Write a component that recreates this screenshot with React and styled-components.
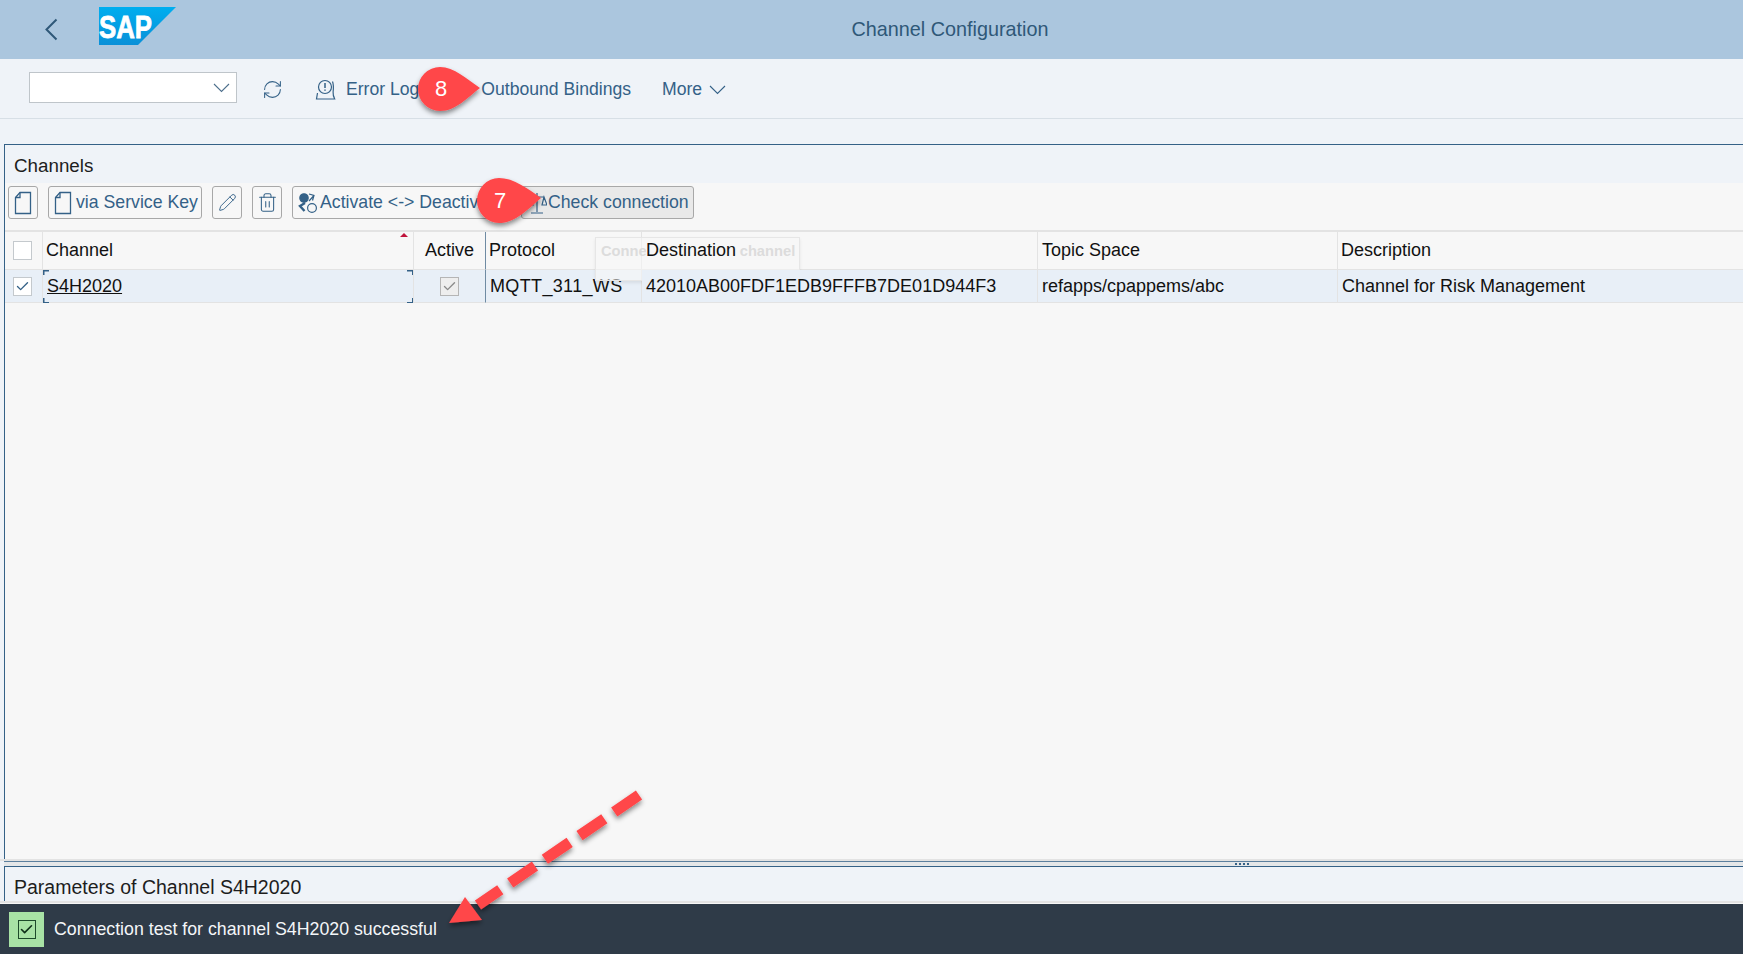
import styled, { createGlobalStyle } from "styled-components";
import { RefreshCw, Pencil, Trash2, Check } from "lucide-react";

const GlobalStyle = createGlobalStyle`
  html, body { margin: 0; padding: 0; background: #fff; }
  body { font-family: "Liberation Sans", Arial, sans-serif; }
`;

const Page = styled.div`
  position: relative;
  width: 1743px;
  height: 957px;
  overflow: hidden;
  display: flex;
  flex-direction: column;
  background: #eff3f8;
`;

const Header = styled.header`
  height: 59px;
  flex: none;
  background: #abc6de;
  display: flex;
  align-items: center;
  position: relative;
  color: #2f5878;
`;

const BackIcon = styled.svg`
  margin-left: 44px;
`;

const Logo = styled.svg`
  margin-left: 41px;
  margin-top: -7px;
`;

const HeaderTitle = styled.div`
  position: absolute;
  left: 0;
  right: 0;
  top: 18px;
  text-align: center;
  font-size: 19.8px;
  padding-left: 157px;
  color: #2f5878;
`;

const Toolbar = styled.div`
  height: 60px;
  flex: none;
  box-sizing: border-box;
  border-bottom: 1px solid #d7dfe6;
  display: flex;
  align-items: center;
  padding: 2px 0 0 29px;
  color: #346187;
  font-size: 17.6px;
`;

const Select = styled.div`
  width: 208px;
  height: 31px;
  margin-bottom: 4px;
  box-sizing: border-box;
  background: #fff;
  border: 1px solid #bfc5ca;
  display: flex;
  align-items: center;
  justify-content: flex-end;
  padding-right: 6px;
  color: #4d6f8c;
`;

const ToolAction = styled.div`
  margin-left: ${(props) => props.$gap}px;
  display: flex;
  align-items: center;
  gap: ${(props) => props.$inner || 0}px;
`;

const Panel = styled.section`
  flex: ${(props) => (props.$grow ? 1 : "none")};
  min-height: 0;
  margin-left: 4px;
  margin-top: ${(props) => props.$top || 0}px;
  border-left: 1px solid #346187;
  border-top: 1px solid #346187;
  display: flex;
  flex-direction: column;
  background: #f7f7f7;
`;

const PanelTitle = styled.div`
  height: ${(props) => props.$height}px;
  flex: none;
  box-sizing: border-box;
  background: #eff3f8;
  color: #1d1d1d;
  font-size: ${(props) => props.$size}px;
  padding-left: 9px;
  padding-top: ${(props) => props.$drop}px;
  display: flex;
  align-items: center;
`;

const ButtonRow = styled.div`
  height: 47px;
  flex: none;
  display: flex;
  align-items: center;
  padding-left: 3px;
  padding-bottom: 8px;
  box-sizing: border-box;
`;

const TableButton = styled.div`
  height: 33px;
  box-sizing: border-box;
  margin-right: ${(props) => props.$mr ?? 10}px;
  width: ${(props) => props.$width}px;
  flex: none;
  border: 1px solid #a8a8a8;
  border-radius: 3px;
  background: ${(props) => (props.$active ? "#e9e9e9" : "#f7f7f7")};
  color: #346187;
  font-size: 17.7px;
  display: flex;
  align-items: center;
  justify-content: ${(props) => (props.$center ? "center" : "flex-start")};
  padding-left: ${(props) => (props.$center ? 0 : 5)}px;
  white-space: nowrap;
  overflow: hidden;
`;

const ButtonLabel = styled.span`
  margin-left: ${(props) => props.$gap}px;
`;

const TableGrid = styled.div`
  display: grid;
  grid-template-columns: 38px 371px 72px 156px 396px 300px 1fr;
  grid-template-rows: 38px 33px;
  border-top: 2px solid #e3e3e3;
  color: #111;
  font-size: 18px;
`;

const Cell = styled.div`
  display: flex;
  align-items: center;
  box-sizing: border-box;
  padding-left: ${(props) => props.$pad ?? 3}px;
  justify-content: ${(props) => (props.$center ? "center" : "flex-start")};
  white-space: nowrap;
  letter-spacing: ${(props) => (props.$track ? "0.35px" : "normal")};
  border-right: ${(props) => (props.$last ? "0" : "1px solid")} ${(props) => (props.$dark ? "#6f8ba3" : "#e3e3e3")};
  border-bottom: 1px solid #e3e3e3;
  background: ${(props) => (props.$row ? "#e8eff7" : "transparent")};
  position: ${(props) => (props.$above ? "relative" : "static")};
  z-index: ${(props) => (props.$above ? 3 : "auto")};
`;

const SortCell = styled(Cell)`
  position: relative;
`;

const HeaderLabel = styled.span`
  position: relative;
  z-index: 3;
  background: #f7f7f7;
`;

const SortMark = styled.span`
  position: absolute;
  right: 5px;
  top: 1px;
  border-left: 4px solid transparent;
  border-right: 4px solid transparent;
  border-bottom: 4px solid #c0143c;
`;

const FocusCell = styled(Cell)`
  position: relative;
  &::before {
    content: "";
    position: absolute;
    inset: 0 0 -1px 0;
    background:
      linear-gradient(#346187, #346187) top left / 6px 1.5px no-repeat,
      linear-gradient(#346187, #346187) top left / 1.5px 5px no-repeat,
      linear-gradient(#346187, #346187) bottom left / 6px 1.5px no-repeat,
      linear-gradient(#346187, #346187) bottom left / 1.5px 5px no-repeat,
      linear-gradient(#346187, #346187) top right / 6px 1.5px no-repeat,
      linear-gradient(#346187, #346187) top right / 1.5px 5px no-repeat,
      linear-gradient(#346187, #346187) bottom right / 6px 1.5px no-repeat,
      linear-gradient(#346187, #346187) bottom right / 1.5px 5px no-repeat;
  }
`;

const ChannelLink = styled.span`
  text-decoration: underline;
  color: #111;
`;

const CheckBox = styled.div`
  width: 17px;
  height: 17px;
  background: ${(props) => (props.$disabled ? "#eeeeee" : "#fff")};
  border: 1px solid ${(props) => (props.$disabled ? "#b5b5b5" : "#c4c9cd")};
  display: flex;
  align-items: center;
  justify-content: center;
  color: ${(props) => (props.$disabled ? "#8a8a8a" : "#346187")};
`;

const Tooltip = styled.div`
  position: absolute;
  left: 595px;
  top: 237px;
  width: 205px;
  height: 44px;
  box-sizing: border-box;
  padding: 5px;
  background: rgba(247, 247, 247, 0.55);
  border: 1px solid #e6e6e6;
  box-shadow: 0 2px 3px rgba(0, 0, 0, 0.08);
  color: #dcdcdc;
  font-size: 14.7px;
  font-weight: bold;
  white-space: nowrap;
  z-index: 2;
`;

const Splitter = styled.div`
  height: 5px;
  flex: none;
  margin-left: 4px;
  box-sizing: border-box;
  background: #e4e6e8;
  border-top: 1px solid #5b7f9e;
  display: flex;
  justify-content: flex-end;
  align-items: center;
  padding-right: 494px;
  gap: 2px;
`;

const GrabDot = styled.span`
  width: 2px;
  height: 2px;
  background: #346187;
`;

const BottomRule = styled.div`
  height: 2px;
  flex: none;
  background: #e3e3e3;
`;

const WhiteLine = styled.div`
  height: 1px;
  flex: none;
  background: #f7f7f7;
`;

const MessageBar = styled.div`
  height: 50px;
  flex: none;
  background: #2f3b48;
  display: flex;
  align-items: center;
  padding-left: 9px;
  color: #f4f6f8;
  font-size: 17.75px;
  margin-bottom: 3px;
`;

const MessageIcon = styled.div`
  width: 35px;
  height: 35px;
  background: #a8e2a5;
  display: flex;
  align-items: center;
  justify-content: center;
  margin-right: 10px;
`;

const MessageCheck = styled.div`
  width: 16px;
  height: 17px;
  border: 1px solid #1d4a2a;
  display: flex;
  align-items: center;
  justify-content: center;
  color: #0f2f19;
`;

const PageEnd = styled.div`
  position: absolute;
  left: 0;
  right: 0;
  bottom: 0;
  height: 3px;
  background: #fff;
`;

const Annotations = styled.svg`
  position: absolute;
  left: 0;
  top: 0;
  z-index: 5;
  pointer-events: none;
`;

const Chevron = () => (
  <svg width="17" height="10" viewBox="0 0 17 10" fill="none" stroke="currentColor" strokeWidth="1.1">
    <path d="M1 1l7.500 7.500L16 1" />
  </svg>
);

const PageIcon = () => (
  <svg width="18" height="24" viewBox="0 0 18 24" fill="none" stroke="#346187" strokeWidth="1.3">
    <path d="M6 1.500h10.500v21H1.500V6.500z" />
    <path d="M6 1.500v5H1.500" />
  </svg>
);

const LogIcon = () => (
  <svg width="22" height="22" viewBox="0 0 22 22" fill="none" stroke="#346187" strokeWidth="1.2">
    <circle cx="10" cy="8" r="6.500" />
    <path d="M10 4v5M10 10.500v1.300" strokeWidth="1.500" />
    <path d="M17.500 2.500c1.200 3 1 7 .6 10.500-.2 2.500.6 5 1.600 7H1.500l1-6" />
  </svg>
);

const PeopleIcon = () => (
  <svg width="20" height="22" viewBox="0 0 20 22" fill="none" stroke="#346187" strokeWidth="1.2">
    <circle cx="6" cy="6" r="4.200" fill="#346187" />
    <path d="M11 2l5 1.500-1.500 5M16 3.500L11 9" />
    <path d="M7 11L2 14l4.500 5" strokeWidth="2.400" />
    <circle cx="14" cy="16" r="4.400" />
  </svg>
);

const BalanceIcon = () => (
  <svg width="20" height="24" viewBox="0 0 20 24" fill="none" stroke="#346187" strokeWidth="1.2">
    <path d="M10 2v19M4 22h12M3 6h14M3 6l-2 8h5zM17 6l-2 8h5z" />
  </svg>
);

const App = () => {
  return (
    <Page>
      <GlobalStyle />
      <Header>
        <BackIcon width="14" height="23" viewBox="0 0 14 23" fill="none" stroke="#2f5878" strokeWidth="2">
          <path d="M12.500 1.500l-10 10 10 10" />
        </BackIcon>
        <Logo width="77" height="38" viewBox="0 0 77 38">
          <defs>
            <linearGradient id="sapBlue" x1="0" y1="0" x2="0" y2="1">
              <stop offset="0" stopColor="#00aeef" />
              <stop offset="1" stopColor="#0a90d8" />
            </linearGradient>
          </defs>
          <polygon points="0,0 77,0 39,38 0,38" fill="url(#sapBlue)" />
          <text x="0" y="31" fontFamily="Liberation Sans" fontWeight="bold" fontSize="32" textLength="53" lengthAdjust="spacingAndGlyphs" fill="#fff" stroke="#fff" strokeWidth="0.8">SAP</text>
        </Logo>
        <HeaderTitle>Channel Configuration</HeaderTitle>
      </Header>

      <Toolbar>
        <Select>
          <Chevron />
        </Select>
        <ToolAction $gap={25}>
          <RefreshCw size={21} strokeWidth={1.2} />
        </ToolAction>
        <ToolAction $gap={32} $inner={9}>
          <LogIcon />
          Error Log
        </ToolAction>
        <ToolAction $gap={62}>Outbound Bindings</ToolAction>
        <ToolAction $gap={31} $inner={7}>
          More
          <Chevron />
        </ToolAction>
      </Toolbar>

      <Panel $grow $top={25}>
        <PanelTitle $height={38} $size={18.8} $drop={3}>Channels</PanelTitle>
        <ButtonRow>
          <TableButton $width={30} $center>
            <PageIcon />
          </TableButton>
          <TableButton $width={154}>
            <PageIcon />
            <ButtonLabel $gap={4}>via Service Key</ButtonLabel>
          </TableButton>
          <TableButton $width={30} $center>
            <Pencil size={19} strokeWidth={1.2} />
          </TableButton>
          <TableButton $width={30} $center>
            <Trash2 size={21} strokeWidth={1.2} />
          </TableButton>
          <TableButton $width={220} $mr={9}>
            <PeopleIcon />
            <ButtonLabel $gap={2}>Activate &lt;-&gt; Deactivate</ButtonLabel>
          </TableButton>
          <TableButton $width={173} $active>
            <BalanceIcon />
            <ButtonLabel $gap={1}>Check connection</ButtonLabel>
          </TableButton>
        </ButtonRow>

        <TableGrid>
          <Cell $pad={8}>
            <CheckBox />
          </Cell>
          <SortCell>
            Channel
            <SortMark />
          </SortCell>
          <Cell $pad={11} $dark>Active</Cell>
          <Cell>Protocol</Cell>
          <Cell $pad={4}>
            <HeaderLabel>Destination</HeaderLabel>
          </Cell>
          <Cell $pad={4}>Topic Space</Cell>
          <Cell $last>Description</Cell>

          <Cell $pad={8} $row>
            <CheckBox>
              <Check size={15} strokeWidth={2.2} />
            </CheckBox>
          </Cell>
          <FocusCell $row $pad={4}>
            <ChannelLink>S4H2020</ChannelLink>
          </FocusCell>
          <Cell $row $dark $center $pad={0}>
            <CheckBox $disabled>
              <Check size={15} strokeWidth={2.2} />
            </CheckBox>
          </Cell>
          <Cell $row $track $pad={4}>MQTT_311_WS</Cell>
          <Cell $row $above $pad={4}>42010AB00FDF1EDB9FFFB7DE01D944F3</Cell>
          <Cell $row $pad={4}>refapps/cpappems/abc</Cell>
          <Cell $row $last $pad={4}>Channel for Risk Management</Cell>
        </TableGrid>
      </Panel>

      <Tooltip>Connection test for channel</Tooltip>

      <BottomRule />
      <Splitter>
        <GrabDot />
        <GrabDot />
        <GrabDot />
        <GrabDot />
      </Splitter>

      <Panel>
        <PanelTitle $height={34} $size={19.5} $drop={6}>Parameters of Channel S4H2020</PanelTitle>
      </Panel>
      <BottomRule />
      <WhiteLine />

      <MessageBar>
        <MessageIcon>
          <MessageCheck>
            <Check size={15} strokeWidth={2.6} />
          </MessageCheck>
        </MessageIcon>
        Connection test for channel S4H2020 successful
      </MessageBar>
      <PageEnd />

      <Annotations width="1743" height="957" viewBox="0 0 1743 957">
        <defs>
          <filter id="pinShadow" x="-30%" y="-30%" width="160%" height="170%">
            <feDropShadow dx="0" dy="3" stdDeviation="2.500" floodColor="#000" floodOpacity="0.45" />
          </filter>
        </defs>
        <g filter="url(#pinShadow)">
          <path fill="#ff4649" d="M440 67c14 0 27 12 40 21-12 9-24 23-40 23a22 22 0 0 1 0-44z" />
          <path fill="#ff4649" d="M499 178c15 0 29 11 42 20-12 10-25 25-42 25a22.500 22.500 0 0 1-22-22.500 22.500 22.500 0 0 1 22-22.500z" />
          <line x1="639" y1="795" x2="478" y2="905" stroke="#ff4649" strokeWidth="11" strokeDasharray="30 12" />
          <path fill="#ff4649" d="M449 923l16-26 17 23z" />
        </g>
        <text x="441" y="96" fill="#fff" fontFamily="Liberation Sans" fontSize="22" textAnchor="middle">8</text>
        <text x="500" y="208" fill="#fff" fontFamily="Liberation Sans" fontSize="22" textAnchor="middle">7</text>
      </Annotations>
    </Page>
  );
};

export default App;
